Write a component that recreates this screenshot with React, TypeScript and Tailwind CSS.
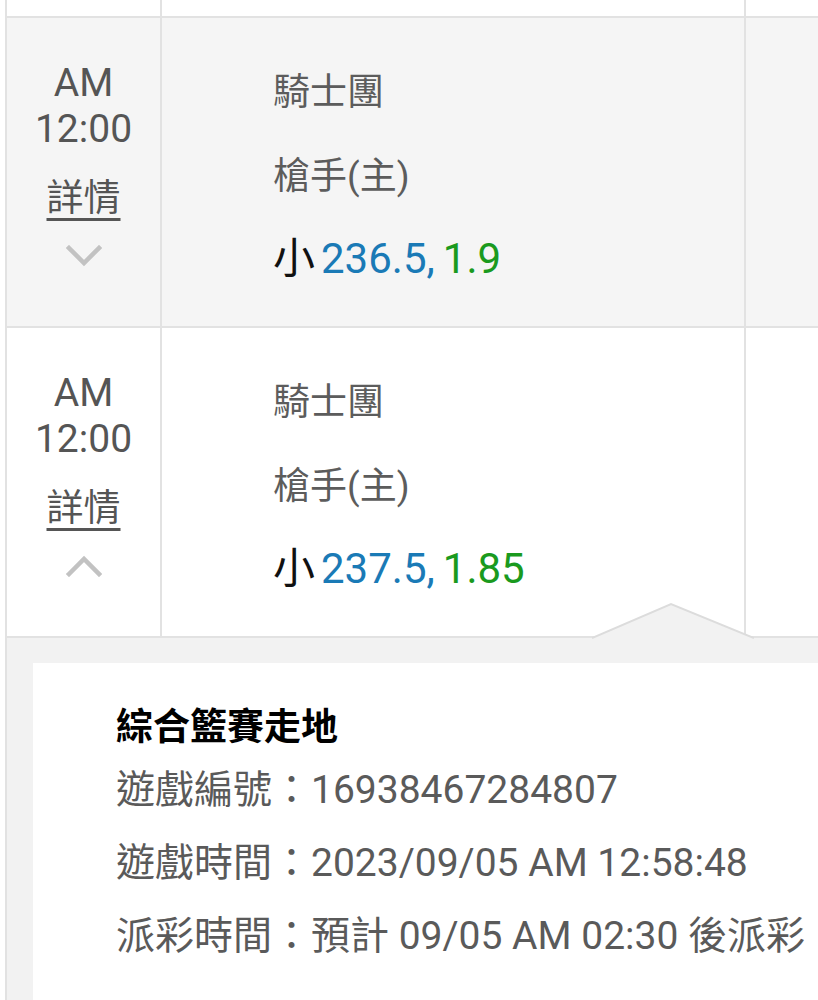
import React from "react";

type Row = {
  line: string;
  odds: string;
  price: string;
  open: boolean;
  shaded: boolean;
};

const rows: Row[] = [
  { line: "小", odds: "236.5,", price: "1.9", open: false, shaded: true },
  { line: "小", odds: "237.5,", price: "1.85", open: true, shaded: false },
];

function Chevron({ up }: { up: boolean }) {
  return (
    <svg width="36" height="22" viewBox="0 0 36 22" fill="none" className="mx-auto">
      <path
        d={up ? "M3 19 L18 4 L33 19" : "M3 3 L18 18 L33 3"}
        stroke="#c2c2c2"
        strokeWidth="4.5"
        strokeLinecap="square"
      />
    </svg>
  );
}

function MatchRow({ row }: { row: Row }) {
  return (
    <div className={`flex h-[310px] border-b-2 border-[#e2e2e2] ${row.shaded ? "bg-[#f5f5f5]" : "bg-white"}`}>
      <div className="w-[155px] shrink-0 border-r-2 border-[#e2e2e2] pt-[42px] text-center text-[39px] leading-[46px] text-[#555]">
        <div>AM</div>
        <div>12:00</div>
        <div className="mt-[24px] text-[37px] leading-[46px]">
          <span className="underline decoration-[3px] underline-offset-[7px]">詳情</span>
        </div>
        <div className="mt-[23px]">
          <Chevron up={row.open} />
        </div>
      </div>
      <div className="w-[584px] shrink-0 border-r-2 border-[#e2e2e2] pl-[111px] pt-[33px] text-[37px] leading-[84px] text-[#5c5c5c]">
        <div>騎士團</div>
        <div>槍手(主)</div>
        <div className="text-[42px] leading-[80px]">
          <span className="text-[#111]">{row.line}</span>
          <span className="ml-[6px] text-[#1a7ab6]">{row.odds}</span>
          <span className="ml-[8px] text-[#1a9a1e]">{row.price}</span>
        </div>
      </div>
      <div className="flex-1" />
    </div>
  );
}

export default function App() {
  return (
    <div
      className="h-[1000px] w-[818px] overflow-hidden bg-white pl-[5px]"
      style={{ fontFamily: 'Roboto, "Noto Sans CJK TC", sans-serif' }}
    >
      <div className="border-l-2 border-[#e2e2e2]">
        <div className="flex h-[18px] border-b-2 border-[#e2e2e2]">
          <div className="w-[155px] shrink-0 border-r-2 border-[#e2e2e2]" />
          <div className="w-[584px] shrink-0 border-r-2 border-[#e2e2e2]" />
          <div className="flex-1" />
        </div>
        {rows.map((row, i) => (
          <MatchRow key={i} row={row} />
        ))}

        <div className="relative bg-[#f2f2f2] pl-[26px] pt-[25px]">
          <svg
            width="162"
            height="38"
            viewBox="0 0 162 38"
            className="absolute left-[585px] top-[-36px]"
          >
            <path d="M0 36 L79 2 L162 36 Z" fill="#f2f2f2" />
            <path d="M0 36 L79 2 L162 36" fill="none" stroke="#dcdcdc" strokeWidth="2" />
          </svg>
          <div className="h-[400px] bg-white pl-[83px] pt-[40px]">
            <div className="text-[37px] font-bold leading-[50px] text-black">綜合籃賽走地</div>
            <div className="mt-[1px] text-[39px] leading-[73px] text-[#5a5a5a]">
              <div>遊戲編號：16938467284807</div>
              <div>遊戲時間：2023/09/05 AM 12:58:48</div>
              <div>派彩時間：預計 09/05 AM 02:30 後派彩</div>
            </div>
          </div>
        </div>
      </div>
    </div>
  );
}
